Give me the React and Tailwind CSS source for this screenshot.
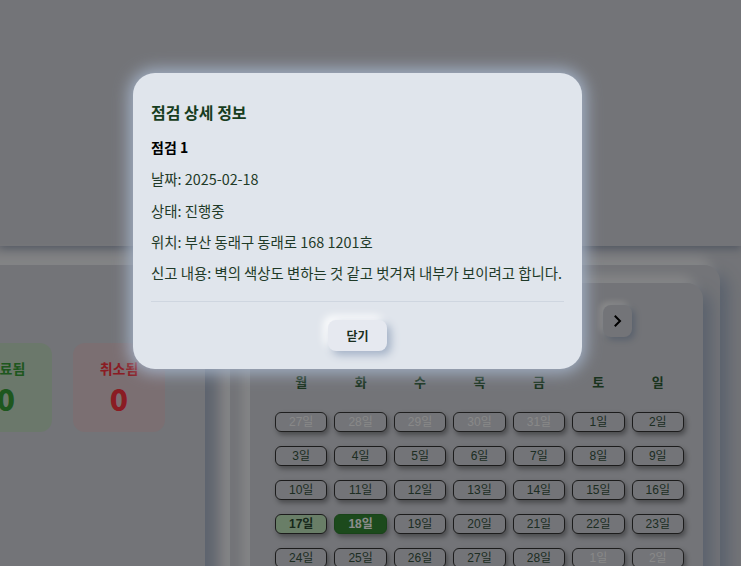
import { ChevronLeft } from 'lucide-react'

const weekdays = ['월', '화', '수', '목', '금', '토', '일']

const buildDays = () => {
  const days = []
  for (let d = 27; d <= 31; d++) days.push({ day: d, muted: true })
  for (let d = 1; d <= 28; d++) days.push({ day: d, muted: false })
  for (let d = 1; d <= 2; d++) days.push({ day: d, muted: true })
  return days
}

const DayButton = ({ day, muted, today, selected }) => {
  let cls = 'border-[#333] bg-[#d1d3da] text-[#35523f]'
  if (muted) cls = 'border-[#3a3a3a] bg-[#d1d3da] text-[#f8f8f8]'
  if (today) cls = 'border-[#333] bg-[#bfe6bc] text-[#2c4a32] font-bold'
  if (selected) cls = 'border-[#2f7a2f] bg-[#338733] text-white font-bold'
  return (
    <button
      className={`h-[20px] rounded-md border text-[12px] leading-none shadow-[2px_3px_5px_rgba(0,0,0,0.35)] ${cls}`}
      style={{ fontFamily: '"Liberation Sans", "Noto Sans CJK KR", sans-serif' }}
    >
      {day}일
    </button>
  )
}

const App = () => {
  const days = buildDays()

  return (
    <div
      className="relative h-[566px] w-full overflow-hidden bg-[#d1d3da]"
      style={{ fontFamily: '"Noto Sans CJK KR", "Noto Sans", sans-serif' }}
    >
      {/* Top section */}
      <div className="h-[246px] w-full bg-[#d1d3da] shadow-[0_3px_8px_#98a2b4]" />

      <div className="mt-[19px] flex items-start">
        {/* Status summary */}
        <aside className="ml-[-60px] h-[420px] w-[265px] shrink-0 rounded-2xl bg-[#d1d3da] pl-[20px] pt-[78px] shadow-[8px_8px_16px_#a3b1c6,-8px_-8px_16px_#ffffff]">
          <div className="flex gap-[21px]">
            <div className="flex h-[89px] w-[92px] flex-col items-center rounded-xl bg-[#c4dac4] pt-[15px]">
              <span className="text-[14px] font-bold leading-5 text-[#379e37]">완료됨</span>
              <span className="mt-[4px] text-[30px] font-black leading-8 text-[#379e37]">0</span>
            </div>
            <div className="flex h-[89px] w-[92px] flex-col items-center rounded-xl bg-[#e0cacf] pt-[15px]">
              <span className="text-[14px] font-bold leading-5 text-[#fc3340]">취소됨</span>
              <span className="mt-[4px] text-[30px] font-black leading-8 text-[#fc3340]">0</span>
            </div>
          </div>
        </aside>

        {/* Calendar */}
        <section className="ml-[25px] h-[400px] w-[490px] shrink-0 rounded-2xl bg-[#d1d3da] pl-[20px] pr-[17px] pt-[18px] shadow-[8px_8px_16px_#a3b1c6,-6px_-6px_12px_#ffffff]">
          <div className="h-[380px] rounded-2xl bg-[#d1d3da] pt-[22px] shadow-[8px_8px_16px_#a3b1c6,-6px_-6px_12px_#ffffff]">
            <div className="flex items-center justify-between pl-[77px] pr-[71px]">
              <button className="flex h-[32px] w-[29px] items-center justify-center rounded-lg bg-[#d1d3da] shadow-[3px_3px_6px_#a3b1c6,-3px_-3px_6px_#ffffff]">
                <ChevronLeft className="h-4 w-4" />
              </button>
              <h2 className="text-[16px] font-bold text-[#1f4a26]">2025년 2월</h2>
              <button className="flex h-[32px] w-[29px] items-center justify-center rounded-lg bg-[#d1d3da] shadow-[3px_3px_6px_#a3b1c6,-3px_-3px_6px_#ffffff]">
                <svg width="8" height="12" viewBox="0 0 8 12" fill="none">
                  <path d="M1.5 1.5L6 6l-4.5 4.5" stroke="#000" strokeWidth="2" strokeLinecap="square" />
                </svg>
              </button>
            </div>

            <div className="mt-[35px] grid grid-cols-7 gap-x-[7px] pl-[25px] pr-[19px]">
              {weekdays.map((w) => (
                <div key={w} className="text-center text-[13px] font-bold leading-5 text-[#2e5e36]">
                  {w}
                </div>
              ))}
            </div>

            <div className="mt-[20px] grid grid-cols-7 gap-x-[7px] gap-y-[14px] pl-[25px] pr-[19px]">
              {days.map((d, i) => (
                <DayButton
                  key={i}
                  day={d.day}
                  muted={d.muted}
                  today={!d.muted && d.day === 17}
                  selected={!d.muted && d.day === 18}
                />
              ))}
            </div>
          </div>
        </section>
      </div>

      {/* Backdrop */}
      <div className="absolute inset-0 bg-black/45" />

      {/* Detail modal */}
      <div className="absolute left-[133px] top-[73px] w-[449px] rounded-[22px] bg-[#e0e5ec] px-[18px] pb-[18px] pt-[27px] shadow-[0_0_16px_4px_#a3b1c6]">
        <h3 className="text-[16px] font-bold leading-6 text-[#173d20]">점검 상세 정보</h3>
        <p className="mt-[13px] text-[14px] font-bold leading-5 text-black">점검 1</p>
        <p className="mt-[12px] text-[14.4px] leading-5 text-[#1f3a28]">날짜: 2025-02-18</p>
        <p className="mt-[12px] text-[14.4px] leading-5 text-[#1f3a28]">상태: 진행중</p>
        <p className="mt-[11px] text-[14.4px] leading-5 text-[#1f3a28]">위치: 부산 동래구 동래로 168 1201호</p>
        <p className="mt-[11px] whitespace-nowrap text-[14.4px] leading-5 text-[#1f3a28]">
          신고 내용: 벽의 색상도 변하는 것 같고 벗겨져 내부가 보이려고 합니다.
        </p>
        <div className="mt-[18px] border-t border-[#cfd6e0]" />
        <div className="mt-[18px] flex justify-center">
          <button className="h-[31px] w-[59px] rounded-lg bg-[#e6e9f0] text-[12px] font-bold text-[#1a2e20] shadow-[4px_4px_8px_#a3b1c6,-4px_-4px_8px_#ffffff]">
            닫기
          </button>
        </div>
      </div>
    </div>
  )
}

export default App
